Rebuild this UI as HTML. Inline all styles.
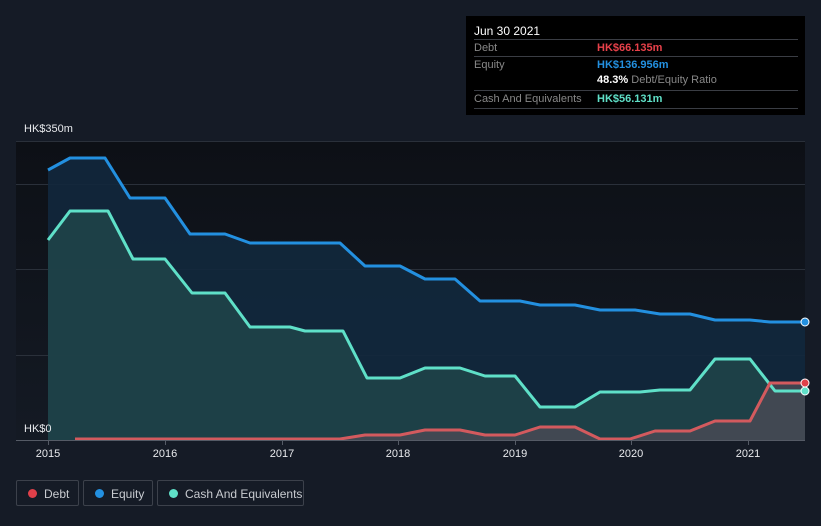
<!DOCTYPE html><html><head><style>
body{margin:0;width:821px;height:526px;background:#151b26;font-family:"Liberation Sans",sans-serif;overflow:hidden;position:relative}
.tt{position:absolute;left:466px;top:16px;width:339px;height:99px;background:#000;color:#fff;font-size:11px}
.row{position:absolute;left:8px;width:324px;border-top:1px solid #3a3d44;height:17px;line-height:17px;color:#888}
.leg{position:absolute;top:480px;height:26px;border:1px solid #3c414b;border-radius:2px;color:#c8cbd0;font-size:12px;line-height:26px;box-sizing:border-box}
.leg i{position:absolute;left:11px;top:8px;width:9px;height:9px;border-radius:50%}
.leg span{position:absolute;left:27px}
</style></head><body>
<svg width="821" height="526" style="position:absolute;left:0;top:0">
<defs><linearGradient id="bg" x1="0" y1="0" x2="0" y2="1"><stop offset="0" stop-color="#0d1016"/><stop offset="1" stop-color="#141a24"/></linearGradient></defs>
<rect x="16" y="141" width="789" height="299" fill="url(#bg)"/>
<g stroke="#2a303a" stroke-width="1"><line x1="16" y1="141.5" x2="805" y2="141.5"/><line x1="16" y1="184.5" x2="805" y2="184.5"/><line x1="16" y1="269.5" x2="805" y2="269.5"/><line x1="16" y1="355.5" x2="805" y2="355.5"/></g>
<path d="M48,170 L70,158 L105,158 L130,198 L165,198 L190,234 L225,234 L250,243 L340,243 L365,266 L400,266 L425,279 L455,279 L480,301 L520,301 L540,305 L575,305 L600,310 L635,310 L660,314 L690,314 L715,320 L750,320 L770,322 L805,322 L805,440 L48,440Z" fill="#12283d" opacity="0.9"/>
<path d="M48,240 L70,211 L108,211 L133,259 L165,259 L192,293 L225,293 L250,327 L290,327 L305,331 L343,331 L367,378 L400,378 L425,368 L460,368 L485,376 L515,376 L540,407 L575,407 L600,392 L640,392 L660,390 L690,390 L715,359 L750,359 L775,391 L805,391 L805,440 L48,440Z" fill="#1f4148" opacity="0.95"/>
<path d="M75,439 L340,439 L365,435 L400,435 L425,430 L460,430 L485,435 L515,435 L540,427 L575,427 L600,439 L630,439 L655,431 L690,431 L715,421 L750,421 L770,383 L805,383 L805,440 L75,440Z" fill="#484a55" opacity="0.85"/>
<path d="M48,170 L70,158 L105,158 L130,198 L165,198 L190,234 L225,234 L250,243 L340,243 L365,266 L400,266 L425,279 L455,279 L480,301 L520,301 L540,305 L575,305 L600,310 L635,310 L660,314 L690,314 L715,320 L750,320 L770,322 L805,322" fill="none" stroke="#2390e0" stroke-width="3" stroke-linejoin="round"/>
<path d="M48,240 L70,211 L108,211 L133,259 L165,259 L192,293 L225,293 L250,327 L290,327 L305,331 L343,331 L367,378 L400,378 L425,368 L460,368 L485,376 L515,376 L540,407 L575,407 L600,392 L640,392 L660,390 L690,390 L715,359 L750,359 L775,391 L805,391" fill="none" stroke="#5fe0c8" stroke-width="3" stroke-linejoin="round"/>
<path d="M75,439 L340,439 L365,435 L400,435 L425,430 L460,430 L485,435 L515,435 L540,427 L575,427 L600,439 L630,439 L655,431 L690,431 L715,421 L750,421 L770,383 L805,383" fill="none" stroke="#d35a5e" stroke-width="3" stroke-linejoin="round"/>
<circle cx="805" cy="322" r="4" fill="#2390e0" stroke="#fff" stroke-width="1"/>
<circle cx="805" cy="383" r="4" fill="#e0404a" stroke="#fff" stroke-width="1"/>
<circle cx="805" cy="391" r="4" fill="#5fe0c8" stroke="#fff" stroke-width="1"/>
<line x1="16" y1="440.5" x2="805" y2="440.5" stroke="#555b66"/>
<g stroke="#555b66"><line x1="48.5" y1="440" x2="48.5" y2="445"/><line x1="165.5" y1="440" x2="165.5" y2="445"/><line x1="282.5" y1="440" x2="282.5" y2="445"/><line x1="398.5" y1="440" x2="398.5" y2="445"/><line x1="515.5" y1="440" x2="515.5" y2="445"/><line x1="631.5" y1="440" x2="631.5" y2="445"/><line x1="748.5" y1="440" x2="748.5" y2="445"/></g>
<g fill="#e8eaed" font-size="11" text-anchor="middle" font-family="Liberation Sans"><text x="48" y="457">2015</text><text x="165" y="457">2016</text><text x="282" y="457">2017</text><text x="398" y="457">2018</text><text x="515" y="457">2019</text><text x="631" y="457">2020</text><text x="748" y="457">2021</text></g>
<text x="24" y="132" fill="#e8eaed" font-size="11" font-family="Liberation Sans">HK$350m</text>
<text x="24" y="432" fill="#e8eaed" font-size="11" font-family="Liberation Sans">HK$0</text>
</svg>
<div class="tt">
<div style="position:absolute;left:8px;top:8px;font-size:12px">Jun 30 2021</div>
<div class="row" style="top:23px">Debt<b style="position:absolute;left:123px;color:#e8414a;font-weight:bold">HK$66.135m</b></div>
<div class="row" style="top:40px">Equity<b style="position:absolute;left:123px;color:#2390e0">HK$136.956m</b></div>
<div style="position:absolute;left:131px;top:58px;color:#888"><b style="color:#fff">48.3%</b> Debt/Equity Ratio</div>
<div class="row" style="top:74px;border-bottom:1px solid #3a3d44">Cash And Equivalents<b style="position:absolute;left:123px;color:#5fe0c8">HK$56.131m</b></div>
</div>
<div class="leg" style="left:16px;width:63px"><i style="background:#e0404a"></i><span>Debt</span></div>
<div class="leg" style="left:83px;width:70px"><i style="background:#2390e0"></i><span>Equity</span></div>
<div class="leg" style="left:157px;width:147px"><i style="background:#5fe0c8"></i><span>Cash And Equivalents</span></div>
</body></html>
